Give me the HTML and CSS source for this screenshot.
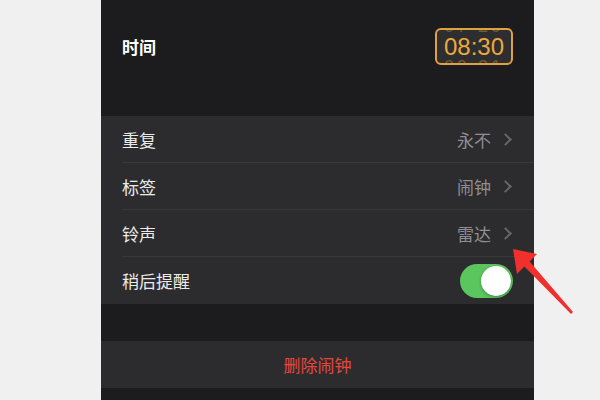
FILE: index.html
```html
<!DOCTYPE html>
<html lang="zh-CN">
<head>
    <meta charset="UTF-8">
    <title>编辑闹钟</title>
    <link rel="stylesheet" href="styles.css">
</head>
<body>
    <div class="screen">
        <div class="time-section">
            <div class="time-row">
                <span class="time-label">时间</span>
                <div class="time-box">
                    <span class="ghost ghost-top">07 29</span>
                    <span class="time-value">08:30</span>
                    <span class="ghost ghost-bottom">09 31</span>
                </div>
            </div>
        </div>

        <div class="group">
            <div class="row">
                <span class="row-label">重复</span>
                <span class="row-value">永不</span>
                <span class="chevron"></span>
            </div>
            <div class="row">
                <span class="row-label">标签</span>
                <span class="row-value">闹钟</span>
                <span class="chevron"></span>
            </div>
            <div class="row">
                <span class="row-label">铃声</span>
                <span class="row-value">雷达</span>
                <span class="chevron"></span>
            </div>
            <div class="row">
                <span class="row-label">稍后提醒</span>
                <span class="toggle"><span class="knob"></span></span>
            </div>
        </div>

        <div class="delete-btn">删除闹钟</div>
    </div>

    <!-- red pointer drawn over the screenshot -->
    <svg class="pointer" width="600" height="400" viewBox="0 0 600 400">
        <polygon points="513,249 537,254 529.6,261.6 573,312 571,314 524.4,266.4 517,274" fill="#f1302d"/>
    </svg>
</body>
</html>
```

FILE: styles.css
```css
body {
    margin: 0;
    background: #f0f0f0;
    font-family: "Noto Sans CJK SC", "Noto Sans", sans-serif;
    width: 600px;
    height: 400px;
    overflow: hidden;
    position: relative;
}

.screen {
    margin-left: 101px;
    width: 433px;
    height: 400px;
    background: #1c1c1e;
}

.time-section {
    height: 116px;
    padding: 28px 21px 0 21px;
    box-sizing: border-box;
}
.time-row {
    display: flex;
    align-items: center;
    justify-content: space-between;
    height: 37px;
}
.time-label {
    color: #ffffff;
    font-size: 17px;
    font-weight: bold;
}
.time-box {
    width: 78px;
    height: 37px;
    box-sizing: border-box;
    border: 2px solid #e0a23e;
    border-radius: 6px;
    background: #2e2e30;
    position: relative;
    overflow: hidden;
    display: flex;
    align-items: center;
    justify-content: center;
}
.time-value {
    font-family: "Liberation Sans", Arial, sans-serif;
    font-size: 24px;
    color: #eea83c;
    line-height: 1;
}
.ghost {
    position: absolute;
    left: 0;
    right: 0;
    text-align: center;
    font-family: "Liberation Sans", Arial, sans-serif;
    font-size: 18px;
    letter-spacing: 3px;
    color: #6e5a34;
    line-height: 18px;
}
.ghost-top { top: -13px; }
.ghost-bottom { bottom: -13px; }

.group {
    background: #2c2c2e;
}
.row {
    height: 47px;
    display: flex;
    align-items: center;
    margin-left: 21px;
    padding-right: 21px;
    border-bottom: 1px solid #38383a;
    box-sizing: border-box;
}
.row:last-child {
    border-bottom: none;
}
.row-label {
    flex: 1;
    color: #ebebeb;
    font-size: 17px;
}
.row-value {
    color: #8e8e93;
    font-size: 17px;
}
.chevron {
    width: 7px;
    height: 7px;
    border-top: 2px solid #66666a;
    border-right: 2px solid #66666a;
    transform: rotate(45deg);
    margin-left: 10px;
    margin-right: 3px;
}
.toggle {
    width: 53px;
    height: 34px;
    border-radius: 17px;
    background: #5bc55e;
    display: flex;
    align-items: center;
    justify-content: flex-end;
    padding: 2px;
    box-sizing: border-box;
}
.knob {
    width: 30px;
    height: 30px;
    border-radius: 50%;
    background: #ffffff;
    box-shadow: 0 1px 3px rgba(0, 0, 0, 0.3);
}

.delete-btn {
    margin-top: 37px;
    height: 47px;
    background: #2c2c2e;
    color: #e5473d;
    font-size: 17px;
    display: flex;
    align-items: center;
    justify-content: center;
}

.pointer {
    position: absolute;
    left: 0;
    top: 0;
}
```
